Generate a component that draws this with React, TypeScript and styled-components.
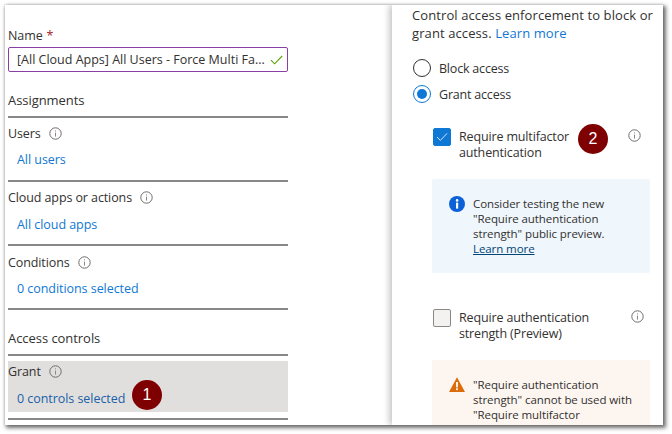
import React from "react";
import styled, { createGlobalStyle } from "styled-components";

const Global = createGlobalStyle`
  html, body { margin: 0; padding: 0; background: #fff; }
  body { font-family: "Open Sans", "Noto Sans", "Liberation Sans", sans-serif; width: 672px; height: 434px; overflow: hidden; }
  #root { width: 672px; height: 434px; }
`;

const Page = styled.div`
  padding: 5px 0 0 5px;
  height: 434px;
  box-sizing: border-box;
`;
const Win = styled.div`
  width: 658px;
  height: 420px;
  display: flex;
  background: #fff;
  overflow: hidden;
  box-shadow: 2px 2px 4px 1px rgba(0,0,0,.55), 0 0 3px rgba(0,0,0,.2);
`;
const Left = styled.div`
  width: 387px;
  box-sizing: border-box;
  padding: 22px 0 0 3px;
  flex: none;
`;
const Right = styled.div`
  flex: 1;
  padding: 1px 0 0 20px;
  box-shadow: -3px 0 6px rgba(0,0,0,.22);
  z-index: 1;
  background: #fff;
`;
const Col = styled.div`
  width: 280px;
`;
const Label = styled.div`
  font-size: 12.5px;
  line-height: 17px;
  color: #323130;
  letter-spacing: -.1px;
  display: flex;
  align-items: center;
`;
const Star = styled.span`
  color: #a4262c;
  margin-left: 4px;
`;
const NameInput = styled.div`
  height: 25px;
  margin-top: 3px;
  border: 1.5px solid #8a3fa6;
  border-radius: 2px;
  box-sizing: border-box;
  display: flex;
  align-items: center;
  justify-content: space-between;
  padding: 0 4px 0 8px;
  font-size: 12.5px;
  color: #323130;
  letter-spacing: 0;
  white-space: nowrap;
`;
const Heading = styled.div<{ $top: number }>`
  font-size: 13px;
  line-height: 18px;
  color: #323130;
  letter-spacing: -.05px;
  margin-top: ${p => p.$top}px;
  padding-bottom: 7px;
  border-bottom: 2px solid #8a8886;
`;
const Section = styled.div<{ $active?: boolean; $height: number; $pad: number; $top?: number }>`
  height: ${p => p.$height}px;
  box-sizing: border-box;
  margin-top: ${p => p.$top ?? 0}px;
  padding-top: ${p => p.$pad}px;
  background: ${p => (p.$active ? "#e1dfdd" : "transparent")};
  position: relative;
`;
const LinkRow = styled.div<{ $dark?: boolean; $gap?: number }>`
  font-size: 12.5px;
  line-height: 17px;
  letter-spacing: -.05px;
  color: ${p => (p.$dark ? "#1a5fa8" : "#0f78d4")};
  margin: ${p => p.$gap ?? 9}px 0 0 9px;
`;
const Rule = styled.div<{ $top?: number }>`
  height: 2px;
  background: #8a8886;
  margin-top: ${p => p.$top ?? 0}px;
`;
const Badge = styled.div<{ $x: number; $y: number }>`
  position: absolute;
  left: ${p => p.$x}px;
  top: ${p => p.$y}px;
  width: 30px;
  height: 30px;
  border-radius: 50%;
  background: #7f0000;
  color: #fff;
  font-family: "Liberation Sans", sans-serif;
  font-size: 16px;
  display: flex;
  align-items: center;
  justify-content: center;
`;
const Intro = styled.div`
  font-size: 13px;
  line-height: 18px;
  color: #323130;
  letter-spacing: .1px;
  width: 250px;
`;
const Anchor = styled.span`
  color: #0f78d4;
`;
const RadioRow = styled.div<{ $top: number }>`
  display: flex;
  align-items: center;
  gap: 8px;
  margin: ${p => p.$top}px 0 0 1px;
  height: 18px;
  font-size: 12.5px;
  letter-spacing: -.2px;
  color: #323130;
`;
const Radio = styled.div<{ $on?: boolean }>`
  width: 18px;
  height: 18px;
  box-sizing: border-box;
  border-radius: 50%;
  border: 1px solid ${p => (p.$on ? "#0f78d4" : "#323130")};
  display: flex;
  align-items: center;
  justify-content: center;
  &::after {
    content: "";
    display: ${p => (p.$on ? "block" : "none")};
    width: 10px;
    height: 10px;
    border-radius: 50%;
    background: #0f78d4;
  }
`;
const CheckRow = styled.div<{ $top: number }>`
  display: flex;
  margin: ${p => p.$top}px 0 0 21px;
  position: relative;
`;
const Box = styled.div<{ $on?: boolean }>`
  width: 18px;
  height: 18px;
  box-sizing: border-box;
  flex: none;
  border-radius: 2px;
  background: ${p => (p.$on ? "#0f78d4" : "#f3f2f1")};
  border: 1px solid ${p => (p.$on ? "#0f78d4" : "#8a8886")};
  display: flex;
  align-items: center;
  justify-content: center;
`;
const CheckText = styled.div`
  margin: 1px 0 0 8px;
  font-size: 12.5px;
  line-height: 16px;
  letter-spacing: -.15px;
  color: #323130;
  width: 150px;
`;
const Callout = styled.div<{ $tone: "info" | "warn"; $top: number; $height: number }>`
  width: 218px;
  height: ${p => p.$height}px;
  flex: none;
  margin: ${p => p.$top}px 0 0 20px;
  background: ${p => (p.$tone === "info" ? "#eff6fc" : "#fdf6f0")};
  border-radius: 2px;
  box-sizing: border-box;
  padding: 17px 0 0 17px;
  display: flex;
  gap: 8px;
`;
const CalloutText = styled.div`
  font-size: 11.5px;
  line-height: 15px;
  letter-spacing: -.08px;
  color: #323130;
  width: 172px;
`;
const DarkLink = styled.span`
  color: #004578;
  text-decoration: underline;
`;
const InfoGlyph = styled.svg<{ $x: number; $y?: number }>`
  flex: none;
  margin-left: ${p => p.$x}px;
  margin-top: ${p => p.$y ?? 0}px;
`;
const CalloutIcon = styled.svg`
  flex: none;
`;

const Info = ({ x, y }: { x: number; y?: number }) => (
  <InfoGlyph $x={x} $y={y} width="13" height="13" viewBox="0 0 13 13">
    <circle cx="6.5" cy="6.5" r="5.7" fill="none" stroke="#6f6d6b" strokeWidth="1" />
    <rect x="6" y="5.6" width="1" height="4" fill="#8a8886" />
    <rect x="6" y="3.4" width="1" height="1" fill="#8a8886" />
  </InfoGlyph>
);

const App = () => (
  <>
    <Global />
    <Page>
      <Win>
        <Left>
          <Col>
            <Label>Name<Star>*</Star></Label>
            <NameInput>
              <span>[All Cloud Apps] All Users - Force Multi Fa...</span>
              <svg width="13" height="10" viewBox="0 0 13 10">
                <path d="M1 5.2 L4.6 8.8 L12.2 1" fill="none" stroke="#57a300" strokeWidth="1.1" />
              </svg>
            </NameInput>
            <Heading $top={19}>Assignments</Heading>
            <Section $height={62} $pad={7}>
              <Label>Users<Info x={8} /></Label>
              <LinkRow>All users</LinkRow>
            </Section>
            <Rule />
            <Section $height={62} $pad={7}>
              <Label>Cloud apps or actions<Info x={8} /></Label>
              <LinkRow $gap={10}>All cloud apps</LinkRow>
            </Section>
            <Rule />
            <Section $height={62} $pad={8}>
              <Label>Conditions<Info x={8} /></Label>
              <LinkRow>0 conditions selected</LinkRow>
            </Section>
            <Rule />
            <Heading $top={19}>Access controls</Heading>
            <Section $height={51} $active $pad={2} $top={5}>
              <Label>Grant<Info x={8} /></Label>
              <LinkRow $dark $gap={10}>0 controls selected</LinkRow>
              <Badge $x={124} $y={19}>1</Badge>
            </Section>
            <Rule $top={6} />
          </Col>
        </Left>
        <Right>
          <Intro>Control access enforcement to block or grant access. <Anchor>Learn more</Anchor></Intro>
          <RadioRow $top={17}><Radio />Block access</RadioRow>
          <RadioRow $top={8}><Radio $on />Grant access</RadioRow>
          <CheckRow $top={25}>
            <Box $on>
              <svg width="12" height="10" viewBox="0 0 12 10">
                <path d="M1 5 L4.4 8.4 L11 1.4" fill="none" stroke="#cfe4f7" strokeWidth="1" />
              </svg>
            </Box>
            <CheckText>Require multifactor authentication</CheckText>
            <Info x={19} y={1} />
            <Badge $x={145} $y={-4}>2</Badge>
          </CheckRow>
          <Callout $tone="info" $top={18} $height={94}>
            <CalloutIcon width="16" height="16" viewBox="0 0 16 16">
              <circle cx="8" cy="8" r="8" fill="#0b62d6" />
              <rect x="7" y="6.6" width="2.2" height="6" fill="#fff" />
              <circle cx="8.1" cy="4.4" r="1.3" fill="#fff" />
            </CalloutIcon>
            <CalloutText>
              Consider testing the new "Require authentication strength" public preview.<br />
              <DarkLink>Learn more</DarkLink>
            </CalloutText>
          </Callout>
          <CheckRow $top={36}>
            <Box />
            <CheckText>Require authentication strength (Preview)</CheckText>
            <Info x={22} y={1} />
          </CheckRow>
          <Callout $tone="warn" $top={18} $height={70}>
            <CalloutIcon width="16" height="15" viewBox="0 0 16 15">
              <path d="M8 0.3 L16 15 L0 15 Z" fill="#dc6c0a" />
              <rect x="7.1" y="5" width="1.8" height="5.4" fill="#fff" />
              <rect x="7.1" y="11.3" width="1.8" height="1.8" fill="#fff" />
            </CalloutIcon>
            <CalloutText>"Require authentication strength" cannot be used with "Require multifactor</CalloutText>
          </Callout>
        </Right>
      </Win>
    </Page>
  </>
);

export default App;
